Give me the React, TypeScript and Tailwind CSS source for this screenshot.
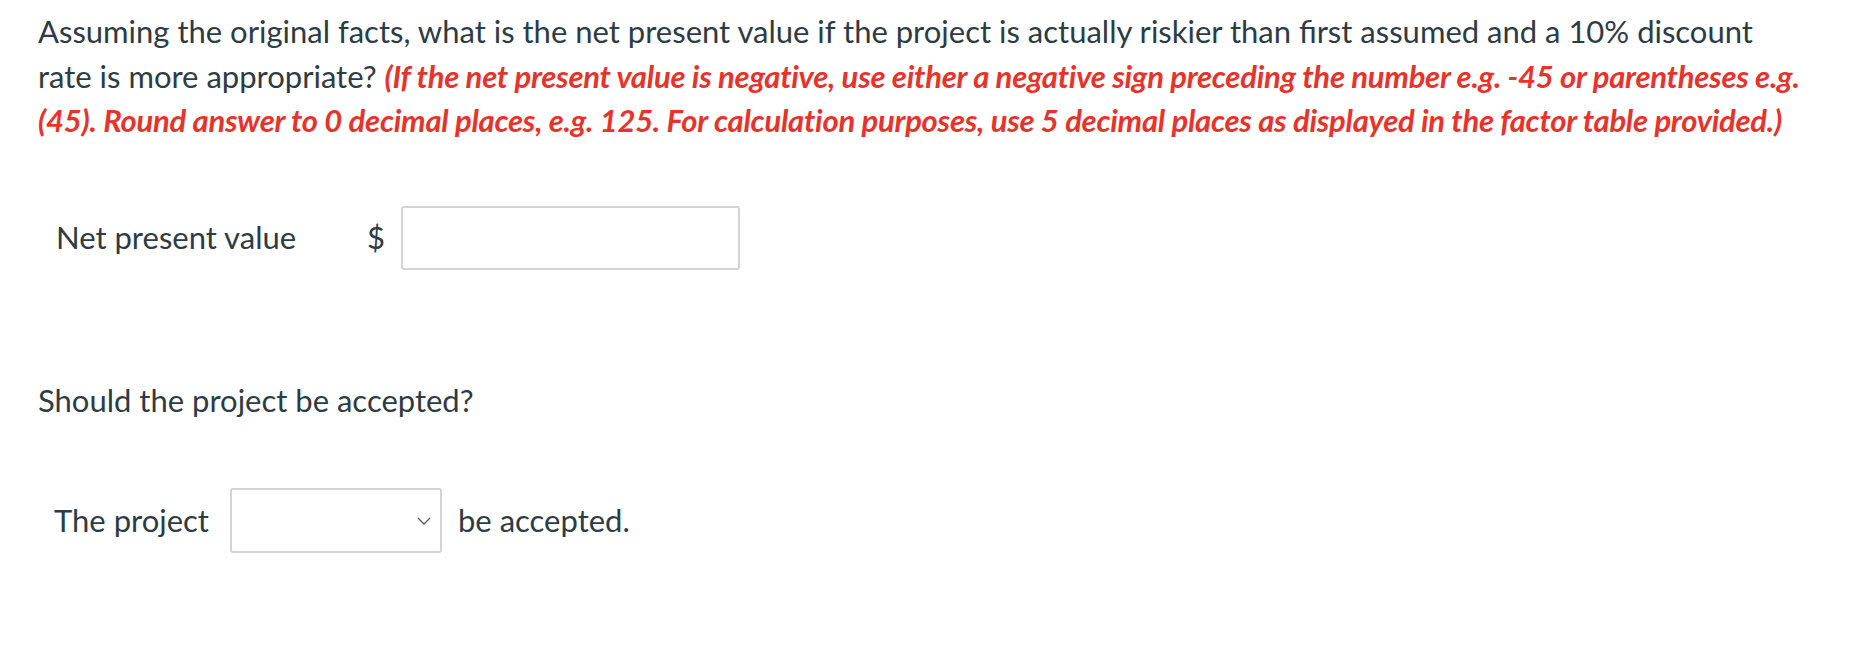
import React from "react";

export default function App() {
  return (
    <div className="w-[1870px] h-[670px] bg-white text-[#2d3b45] font-['Lato',sans-serif] text-[31px] leading-[44.5px]">
      <div className="pl-[38px] pt-[9px] w-[1860px]">
        <p>
          Assuming the original facts, what is the net present value if the project is actually riskier than first assumed and a 10% discount
          <br />
          rate is more appropriate?{" "}
          <span className="text-[#e8322a] font-bold italic tracking-[-0.25px]">
            (If the net present value is negative, use either a negative sign preceding the number e.g. -45 or parentheses e.g.
            <br />
            (45). Round answer to 0 decimal places, e.g. 125. For calculation purposes, use 5 decimal places as displayed in the factor table provided.)
          </span>
        </p>

        <div className="mt-[63px] flex items-center h-[64px] pl-[18px]">
          <span className="w-[311px]">Net present value</span>
          <span className="w-[34px]">$</span>
          <div className="w-[339px] h-[64px] border-2 border-[#d2d4d6] rounded-[3px] bg-white" />
        </div>

        <p className="mt-[108px]">Should the project be accepted?</p>

        <div className="mt-[66px] flex items-center h-[65px] pl-[16px]">
          <span>The project</span>
          <div className="ml-[21px] w-[212px] h-[65px] border-2 border-[#d2d4d6] rounded-[3px] bg-white flex items-center justify-end pr-[9px]">
            <svg width="14" height="8" viewBox="0 0 14 8" fill="none">
              <path d="M1 1 L7 7 L13 1" stroke="#5a6066" strokeWidth="1.4" />
            </svg>
          </div>
          <span className="ml-[16px]">be accepted.</span>
        </div>
      </div>
    </div>
  );
}
